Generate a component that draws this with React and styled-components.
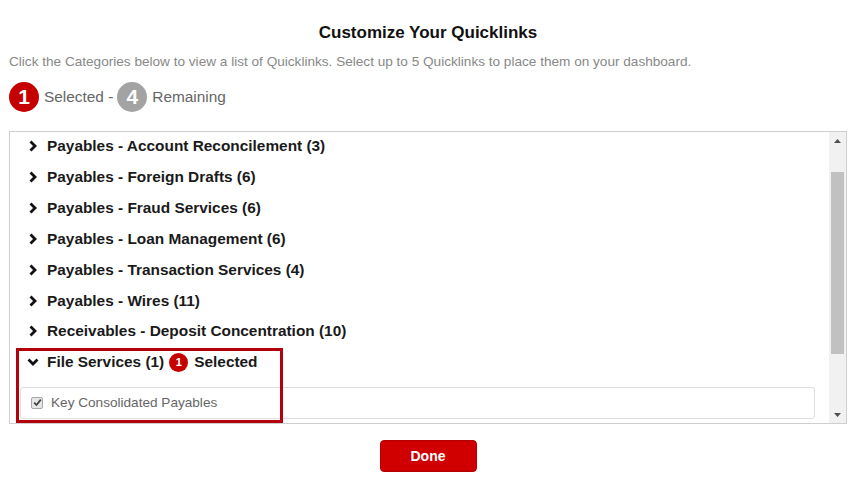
import React from 'react';
import styled, { createGlobalStyle } from 'styled-components';

const GlobalStyle = createGlobalStyle`
  html, body {
    margin: 0;
    padding: 0;
    background: #fff;
  }
  body {
    font-family: "Liberation Sans", Arial, sans-serif;
  }
`;

const categories = [
  'Payables - Account Reconcilement (3)',
  'Payables - Foreign Drafts (6)',
  'Payables - Fraud Services (6)',
  'Payables - Loan Management (6)',
  'Payables - Transaction Services (4)',
  'Payables - Wires (11)',
  'Receivables - Deposit Concentration (10)',
];

const Chevron = ({ open }) => (
  <svg width="12" height="12" viewBox="0 0 12 12">
    {open ? (
      <polyline points="1.5,3.5 6,8 10.5,3.5" fill="none" stroke="#111" strokeWidth="2.8" />
    ) : (
      <polyline points="3.5,1.5 8,6 3.5,10.5" fill="none" stroke="#111" strokeWidth="2.8" />
    )}
  </svg>
);

export default function App() {
  return (
    <>
      <GlobalStyle />
      <Page>
        <Title>Customize Your Quicklinks</Title>
        <Intro>
          Click the Categories below to view a list of Quicklinks. Select up to 5 Quicklinks to place them on your dashboard.
        </Intro>
        <Status>
          <Count $tone="red">1</Count>
          <span>Selected -</span>
          <Count $tone="gray">4</Count>
          <span>Remaining</span>
        </Status>

        <ListBox>
          <ListBody>
            {categories.map((c) => (
              <Row key={c}>
                <Chevron />
                <RowLabel>{c}</RowLabel>
              </Row>
            ))}
            <Group>
              <Row>
                <Chevron open />
                <RowLabel>File Services (1)</RowLabel>
                <MiniBadge>1</MiniBadge>
                <RowLabel>Selected</RowLabel>
              </Row>
              <Item>
                <Check>
                  <svg width="9" height="9" viewBox="0 0 9 9">
                    <polyline points="1.2,4.6 3.5,7 7.8,1.6" fill="none" stroke="#444" strokeWidth="1.8" />
                  </svg>
                </Check>
                <ItemText>Key Consolidated Payables</ItemText>
              </Item>
              <Highlight />
            </Group>
          </ListBody>
          <ScrollBar>
            <ScrollArrow>
              <svg width="7" height="4" viewBox="0 0 7 4"><polygon points="0,4 3.5,0 7,4" fill="#505050" /></svg>
            </ScrollArrow>
            <Track>
              <Thumb />
            </Track>
            <ScrollArrow>
              <svg width="7" height="4" viewBox="0 0 7 4"><polygon points="0,0 7,0 3.5,4" fill="#505050" /></svg>
            </ScrollArrow>
          </ScrollBar>
        </ListBox>

        <Footer>
          <DoneButton>Done</DoneButton>
        </Footer>
      </Page>
    </>
  );
}

const Page = styled.div`
  padding: 23px 8px 0 9px;
  display: flex;
  flex-direction: column;
`;

const Title = styled.h1`
  margin: 0;
  text-align: center;
  font-size: 17px;
  line-height: 20px;
  font-weight: bold;
  color: #111;
`;

const Intro = styled.p`
  margin: 11px 0 0;
  font-size: 13.6px;
  line-height: 16px;
  color: #888;
`;

const Status = styled.div`
  margin-top: 12px;
  display: flex;
  align-items: center;
  gap: 4px;
  height: 30px;
  font-size: 15.4px;
  color: #666;
`;

const Count = styled.span`
  width: 30px;
  height: 30px;
  border-radius: 50%;
  background: ${(p) => (p.$tone === 'red' ? '#c40000' : '#a3a3a3')};
  color: #fff;
  font-weight: bold;
  font-size: 21px;
  display: flex;
  align-items: center;
  justify-content: center;
  margin-right: 1px;
`;

const ListBox = styled.div`
  margin-top: 19px;
  height: 291px;
  border: 1px solid #cfcfcf;
  display: flex;
  overflow: hidden;
`;

const ListBody = styled.div`
  flex: 1;
  overflow: hidden;
  margin-top: -1px;
`;

const Row = styled.div`
  height: 30.85px;
  display: flex;
  align-items: center;
  gap: 8px;
  padding-left: 17px;
`;

const RowLabel = styled.span`
  font-size: 15.4px;
  font-weight: bold;
  color: #1a1a1a;
`;

const MiniBadge = styled.span`
  width: 19px;
  height: 19px;
  border-radius: 50%;
  background: #c40000;
  color: #fff;
  font-size: 11px;
  font-weight: bold;
  display: flex;
  align-items: center;
  justify-content: center;
  margin: 0 -2px 0 -3px;
`;

const Group = styled.div`
  position: relative;
`;

const Item = styled.div`
  margin: 9px 14px 0 10px;
  height: 30px;
  border: 1px solid #dedede;
  border-radius: 3px;
  display: flex;
  align-items: center;
  padding-left: 10px;
  gap: 8px;
`;

const Check = styled.span`
  width: 10px;
  height: 10px;
  border: 1px solid #a8a8a8;
  border-radius: 2px;
  background: #e6e6e6;
  display: flex;
  align-items: center;
  justify-content: center;
`;

const ItemText = styled.span`
  font-size: 13.6px;
  color: #666;
`;

const Highlight = styled.div`
  position: absolute;
  left: 6px;
  top: 1px;
  width: 261px;
  height: 69px;
  border: 3px solid #b3000c;
  pointer-events: none;
`;

const ScrollBar = styled.div`
  width: 17px;
  background: #f1f1f1;
  display: flex;
  flex-direction: column;
`;

const ScrollArrow = styled.div`
  height: 17px;
  display: flex;
  align-items: center;
  justify-content: center;
`;

const Track = styled.div`
  flex: 1;
  padding: 23px 2px 52px;
  display: flex;
`;

const Thumb = styled.div`
  flex: 1;
  background: #c1c1c1;
`;

const Footer = styled.div`
  display: flex;
  justify-content: center;
  margin-top: 16px;
`;

const DoneButton = styled.button`
  width: 97px;
  height: 32px;
  background: #d10000;
  border: 1px solid #b00000;
  border-radius: 4px;
  color: #fff;
  font-family: "Liberation Sans", Arial, sans-serif;
  font-size: 14px;
  font-weight: bold;
  cursor: pointer;
`;
